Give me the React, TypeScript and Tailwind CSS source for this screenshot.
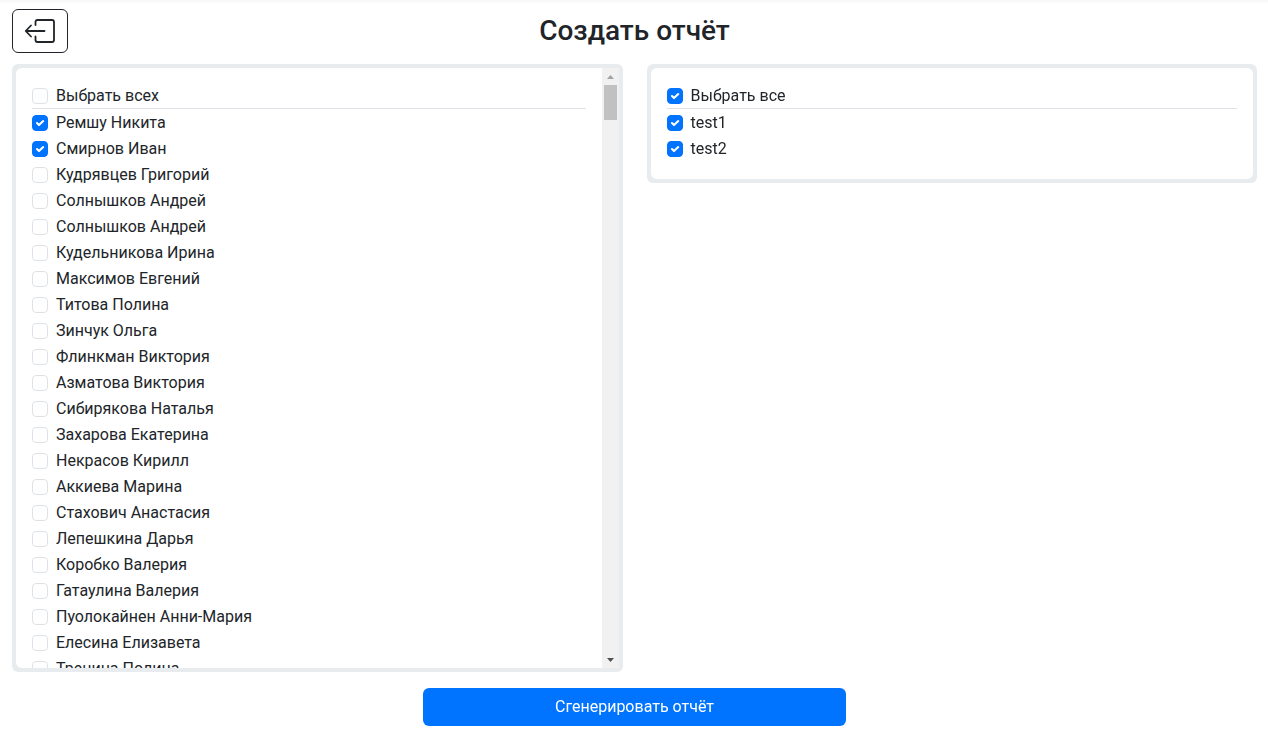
import { useRef, useState } from "react";

const people = [
  "Ремшу Никита", "Смирнов Иван", "Кудрявцев Григорий", "Солнышков Андрей", "Солнышков Андрей",
  "Кудельникова Ирина", "Максимов Евгений", "Титова Полина", "Зинчук Ольга", "Флинкман Виктория",
  "Азматова Виктория", "Сибирякова Наталья", "Захарова Екатерина", "Некрасов Кирилл", "Аккиева Марина",
  "Стахович Анастасия", "Лепешкина Дарья", "Коробко Валерия", "Гатаулина Валерия",
  "Пуолокайнен Анни-Мария", "Елесина Елизавета", "Тренина Полина",
];
const tests = ["test1", "test2"];

function Check({ id, label, checked, onChange }: { id: string; label: string; checked: boolean; onChange: () => void }) {
  return (
    <div className="flex h-6 gap-2">
      <span className="relative mt-1 size-4 shrink-0">
        <input
          id={id}
          type="checkbox"
          checked={checked}
          onChange={onChange}
          className="peer block size-4 appearance-none rounded border border-[#dee2e6] bg-white checked:border-[#0073ff] checked:bg-[#0073ff]"
        />
        <svg viewBox="0 0 16 16" className="pointer-events-none absolute inset-0 hidden size-4 peer-checked:block" fill="none" stroke="#fff" strokeWidth="2.1" strokeLinecap="round" strokeLinejoin="round">
          <path d="M5 8.100l2 2 4.200-4" />
        </svg>
      </span>
      <label htmlFor={id} className="leading-6">{label}</label>
    </div>
  );
}

function CheckList({ prefix, allLabel, items, initial }: { prefix: string; allLabel: string; items: string[]; initial: number[] }) {
  const [selected, setSelected] = useState<number[]>(initial);
  const all = selected.length === items.length;
  return (
    <div className="p-4">
      <div className="border-b border-[#dee2e6]">
        <Check id={`${prefix}-all`} label={allLabel} checked={all} onChange={() => setSelected(all ? [] : items.map((_, i) => i))} />
      </div>
      <div className="flex flex-col gap-0.5 py-0.5">
        {items.map((name, i) => (
          <Check
            key={i}
            id={`${prefix}-${i}`}
            label={name}
            checked={selected.includes(i)}
            onChange={() => setSelected(selected.includes(i) ? selected.filter((n) => n !== i) : [...selected, i])}
          />
        ))}
      </div>
    </div>
  );
}

export default function App() {
  const list = useRef<HTMLDivElement>(null);
  const [progress, setProgress] = useState(0);
  const scroll = (delta: number) => list.current?.scrollBy({ top: delta });

  return (
    <div className="bg-white pr-[11px] pl-3 font-[Roboto,sans-serif] text-base text-[#212529]">
      <div className="-mr-[11px] -ml-3 h-1 bg-linear-to-b from-[#f6f6f6] to-white" />
      <header className="grid grid-cols-[56px_1fr_56px] items-center pt-[5px]">
        <a href="#" aria-label="Назад" className="flex h-11 w-14 items-center justify-center rounded-md border border-[#212529]">
          <svg viewBox="0 0 32 32" className="size-8" fill="none" stroke="#212529" strokeWidth="1.8" strokeLinecap="round" strokeLinejoin="round">
            <path d="M11.500 10V7Q11.500 5 13.500 5H28Q30 5 30 7V25Q30 27 28 27H13.500Q11.500 27 11.500 25V21.500" />
            <path d="M20.500 16H2M7 10.500L1.700 16L7 21.500" />
          </svg>
        </a>
        <h1 className="text-center text-[28px] leading-9 font-medium">Создать отчёт</h1>
      </header>

      <main className="mt-[11px] grid grid-cols-2 items-start gap-6">
        <section className="flex h-[608px] rounded-md bg-[#e9ecef] p-1">
          <div
            ref={list}
            onScroll={(e) => {
              const el = e.currentTarget;
              setProgress(el.scrollTop / Math.max(1, el.scrollHeight - el.clientHeight));
            }}
            className="min-w-0 flex-1 overflow-y-auto rounded-l-md bg-white [scrollbar-width:none]"
          >
            <CheckList prefix="person" allLabel="Выбрать всех" items={people} initial={[0, 1]} />
          </div>
          <div className="flex w-[17px] shrink-0 flex-col bg-[#f1f1f1]">
            <button type="button" aria-label="Вверх" onClick={() => scroll(-40)} className="flex h-[17px] items-center justify-center">
              <svg viewBox="0 0 7 4" className="h-1 w-[7px]" fill="#a3a3a3"><path d="M0 4L3.500 0L7 4Z" /></svg>
            </button>
            <div className="flex flex-1 flex-col px-0.5">
              <div style={{ flexGrow: progress }} />
              <div className="h-[35px] bg-[#c1c1c1]" />
              <div style={{ flexGrow: 1 - progress }} />
            </div>
            <button type="button" aria-label="Вниз" onClick={() => scroll(40)} className="flex h-[17px] items-center justify-center">
              <svg viewBox="0 0 7 4" className="h-1 w-[7px]" fill="#505050"><path d="M0 0L3.500 4L7 0Z" /></svg>
            </button>
          </div>
        </section>
        <section className="rounded-md bg-[#e9ecef] p-1">
          <div className="rounded-md bg-white">
            <CheckList prefix="test" allLabel="Выбрать все" items={tests} initial={[0, 1]} />
          </div>
        </section>
      </main>

      <div className="-mr-3 -ml-3 flex justify-center py-4">
        <button type="button" className="w-1/3 rounded-md bg-[#0073ff] py-[7px] leading-6 text-white">Сгенерировать отчёт</button>
      </div>
    </div>
  );
}
